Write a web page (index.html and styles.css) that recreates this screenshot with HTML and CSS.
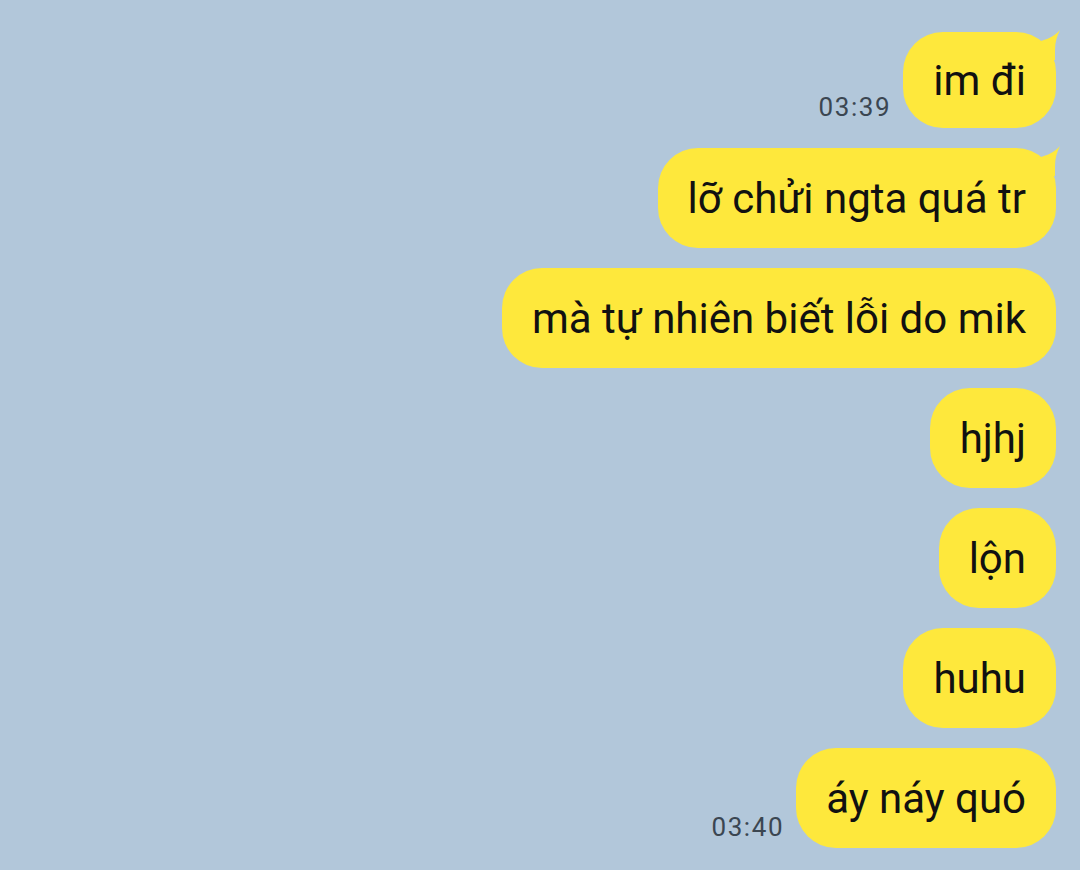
FILE: index.html
```html
<!DOCTYPE html>
<html lang="vi">
<head>
    <meta charset="UTF-8">
    <link rel="stylesheet" href="styles.css">
</head>
<body>
    <div class="chat">
        <div class="row">
            <span class="time">03:39</span>
            <div class="bubble first">
                im đi
                <svg class="tail" width="24" height="30" viewBox="0 0 24 30"><path d="M0 12 C8 10 14 8 20 3 L23 0 C20 6 18 12 18 20 L18 30 L0 30 Z" fill="#fee83c"/></svg>
            </div>
        </div>
        <div class="row">
            <div class="bubble">
                lỡ chửi ngta quá tr
                <svg class="tail" width="24" height="30" viewBox="0 0 24 30"><path d="M0 12 C8 10 14 8 20 3 L23 0 C20 6 18 12 18 20 L18 30 L0 30 Z" fill="#fee83c"/></svg>
            </div>
        </div>
        <div class="row"><div class="bubble">mà tự nhiên biết lỗi do mik</div></div>
        <div class="row"><div class="bubble">hjhj</div></div>
        <div class="row"><div class="bubble">lộn</div></div>
        <div class="row"><div class="bubble">huhu</div></div>
        <div class="row">
            <span class="time">03:40</span>
            <div class="bubble">áy náy quó</div>
        </div>
    </div>
</body>
</html>
```

FILE: styles.css
```css
body{
    margin: 0;
    background: #b2c7da;
    font-family: Roboto, "Noto Sans", sans-serif;
}
.chat{
    display: flex;
    flex-direction: column;
    align-items: flex-end;
    gap: 20px;
    padding: 32px 24px 0 0;
}
.row{
    display: flex;
    align-items: flex-end;
    gap: 12px;
}
.time{
    font-size: 26px;
    letter-spacing: 1.6px;
    line-height: 1;
    color: #3b4651;
    margin-bottom: 8px;
}
.bubble{
    position: relative;
    height: 100px;
    box-sizing: border-box;
    display: flex;
    align-items: center;
    padding: 0 30px;
    background: #fee83c;
    border-radius: 40px;
    font-size: 42px;
    color: #111;
}
.bubble.first{
    height: 96px;
}
.tail{
    position: absolute;
    right: -5px;
    top: -2px;
}
```
